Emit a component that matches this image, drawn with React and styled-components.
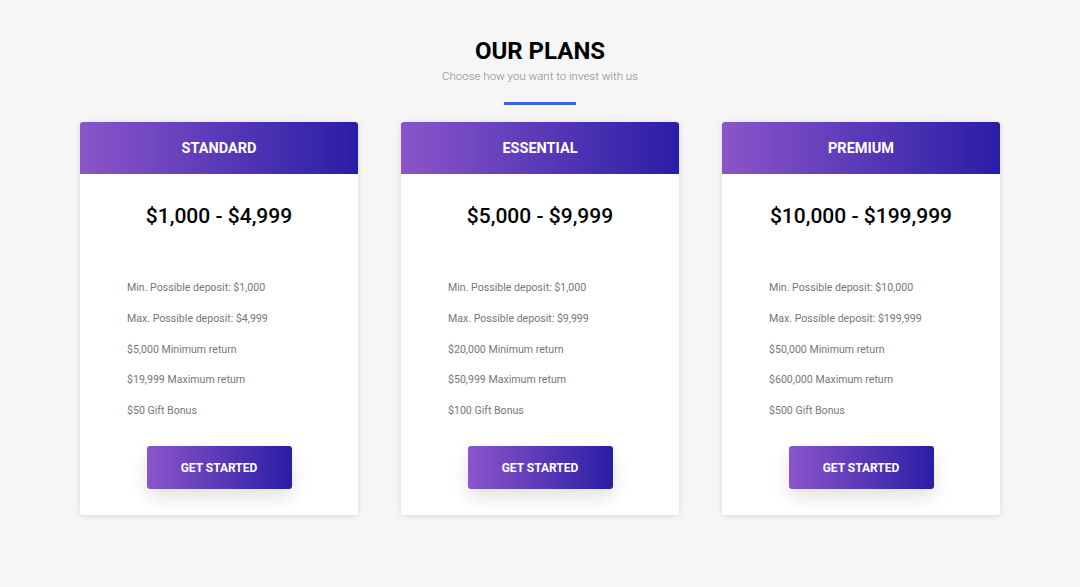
import React from "react";
import styled, { createGlobalStyle } from "styled-components";

const plans = [
  {
    name: "STANDARD",
    price: "$1,000 - $4,999",
    items: [
      "Min. Possible deposit: $1,000",
      "Max. Possible deposit: $4,999",
      "$5,000 Minimum return",
      "$19,999 Maximum return",
      "$50 Gift Bonus",
    ],
  },
  {
    name: "ESSENTIAL",
    price: "$5,000 - $9,999",
    items: [
      "Min. Possible deposit: $1,000",
      "Max. Possible deposit: $9,999",
      "$20,000 Minimum return",
      "$50,999 Maximum return",
      "$100 Gift Bonus",
    ],
  },
  {
    name: "PREMIUM",
    price: "$10,000 - $199,999",
    items: [
      "Min. Possible deposit: $10,000",
      "Max. Possible deposit: $199,999",
      "$50,000 Minimum return",
      "$600,000 Maximum return",
      "$500 Gift Bonus",
    ],
  },
];

const App = () => {
  return (
    <>
      <GlobalStyle />
      <Page>
        <Heading>
          <h1>OUR PLANS</h1>
          <p>Choose how you want to invest with us</p>
          <Underline />
        </Heading>
        <CardRow>
          {plans.map((plan) => (
            <Card key={plan.name}>
              <CardHeader>{plan.name}</CardHeader>
              <CardBody>
                <Price>{plan.price}</Price>
                <FeatureList>
                  {plan.items.map((item) => (
                    <li key={item}>{item}</li>
                  ))}
                </FeatureList>
                <StartButton>GET STARTED</StartButton>
              </CardBody>
            </Card>
          ))}
        </CardRow>
      </Page>
    </>
  );
};

export default App;

const GlobalStyle = createGlobalStyle`
  * {
    box-sizing: border-box;
  }
  body {
    margin: 0;
    background: #f6f6f6;
    font-family: Roboto, "Liberation Sans", sans-serif;
  }
`;

const Page = styled.div`
  width: 1080px;
  height: 587px;
  padding-top: 36px;
  display: flex;
  flex-direction: column;
  align-items: center;
`;

const Heading = styled.div`
  display: flex;
  flex-direction: column;
  align-items: center;

  h1 {
    margin: 0;
    font-size: 24px;
    font-weight: 700;
    line-height: 31px;
    color: #000;
  }

  p {
    margin: 2px 0 0 0;
    font-size: 11.5px;
    font-weight: 300;
    line-height: 14px;
    color: #8a8a8a;
  }
`;

const Underline = styled.div`
  width: 72px;
  height: 3px;
  margin-top: 19px;
  background: #3b63e6;
`;

const CardRow = styled.div`
  margin-top: 17px;
  display: flex;
  gap: 43px;
`;

const Card = styled.div`
  width: 278px;
  height: 393px;
  background: #fff;
  border-radius: 3px;
  overflow: hidden;
  box-shadow: 0 1px 6px rgba(0, 0, 0, 0.12);
  display: flex;
  flex-direction: column;
`;

const CardHeader = styled.div`
  height: 52px;
  display: flex;
  align-items: center;
  justify-content: center;
  background: linear-gradient(to right, #8b55c9, #2a1ea6);
  color: #fff;
  font-size: 14.5px;
  font-weight: 700;
`;

const CardBody = styled.div`
  flex: 1;
  display: flex;
  flex-direction: column;
  align-items: center;
  padding-top: 28px;
`;

const Price = styled.div`
  margin-top: 1px;
  font-size: 21px;
  font-weight: 500;
  line-height: 26px;
  color: #000;
`;

const FeatureList = styled.ul`
  list-style: none;
  margin: 52px 0 0 0;
  padding: 0 0 0 47px;
  align-self: stretch;

  li {
    font-size: 10.6px;
    line-height: 14px;
    color: #777;
    & + li {
      margin-top: 16.8px;
    }
  }
`;

const StartButton = styled.button`
  margin-top: 28px;
  width: 145px;
  height: 43px;
  border: none;
  border-radius: 3px;
  background: linear-gradient(to right, #8b55c9, #2a1ea6);
  color: #fff;
  font-family: Roboto, "Liberation Sans", sans-serif;
  font-size: 12px;
  font-weight: 700;
  box-shadow: 0 8px 18px rgba(0, 0, 0, 0.12);
`;
